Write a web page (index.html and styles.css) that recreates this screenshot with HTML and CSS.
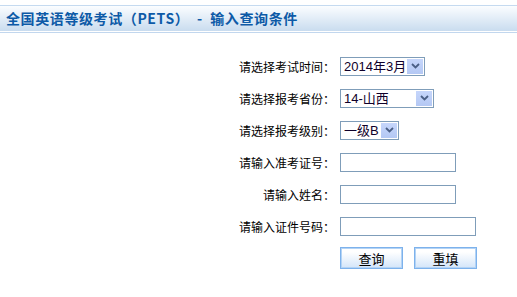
FILE: index.html
```html
<!DOCTYPE html>
<html>
<head>
  <meta charset="utf-8">
  <title>全国英语等级考试（PETS） - 输入查询条件</title>
<link rel="stylesheet" href="styles.css">
</head>
<body>
  <div class="title-bar">全国英语等级考试（PETS）  -  输入查询条件</div>

  <form class="query-form" id="queryForm">
    <label class="field-label" for="examTime">请选择考试时间：</label>
    <span class="select-box select-time">
      <select id="examTime">
        <option>2014年3月</option>
      </select>
      <span class="select-arrow"><svg width="9" height="6" viewBox="0 0 9 6"><path d="M1 1 L4.5 4.5 L8 1" fill="none" stroke="#4a5f86" stroke-width="1.8"/></svg></span>
    </span>

    <label class="field-label" for="province">请选择报考省份：</label>
    <span class="select-box select-province">
      <select id="province">
        <option>14-山西</option>
      </select>
      <span class="select-arrow"><svg width="9" height="6" viewBox="0 0 9 6"><path d="M1 1 L4.5 4.5 L8 1" fill="none" stroke="#4a5f86" stroke-width="1.8"/></svg></span>
    </span>

    <label class="field-label" for="level">请选择报考级别：</label>
    <span class="select-box select-level">
      <select id="level">
        <option>一级B</option>
      </select>
      <span class="select-arrow"><svg width="9" height="6" viewBox="0 0 9 6"><path d="M1 1 L4.5 4.5 L8 1" fill="none" stroke="#4a5f86" stroke-width="1.8"/></svg></span>
    </span>

    <label class="field-label" for="ticketNo">请输入准考证号：</label>
    <span class="field"><input type="text" id="ticketNo" class="text-input"></span>

    <label class="field-label" for="userName">请输入姓名：</label>
    <span class="field"><input type="text" id="userName" class="text-input"></span>

    <label class="field-label" for="idNo">请输入证件号码：</label>
    <span class="field"><input type="text" id="idNo" class="text-input wide"></span>

    <span></span>
    <span class="buttons">
      <input type="submit" class="btn" value="查询">
      <input type="reset" class="btn" value="重填">
    </span>
  </form>
</body>
</html>
```

FILE: styles.css
```css
body {
  margin: 0;
  background-color: #fff;
  font-family: "Liberation Sans", "Noto Sans CJK SC", sans-serif;
  font-size: 12px;
  color: #000;
}

.title-bar {
  margin-top: 5px;
  height: 25px;
  line-height: 25px;
  padding-left: 6px;
  border-top: 1px solid #c5daf0;
  background: linear-gradient(#fbfdff, #c9dcef);
  box-shadow: 0 1px 0 #fff, 0 2px 0 #c2d7ee;
  color: #0d5aa7;
  font-family: "Noto Sans CJK SC", sans-serif;
  font-size: 14px;
  font-weight: bold;
  letter-spacing: 0.6px;
  white-space: pre;
}

.query-form {
  display: grid;
  grid-template-columns: 335px auto;
  grid-auto-rows: 32px;
  column-gap: 5px;
  align-items: center;
  padding-top: 19px;
}

.field-label {
  text-align: right;
  font-family: "Noto Sans CJK SC", sans-serif;
  font-size: 12px;
}

.select-box {
  position: relative;
  display: block;
  height: 19px;
  box-sizing: border-box;
  border: 1px solid #7f9db9;
  background: #fff;
}

.select-time { width: 85px; }
.select-province { width: 94px; }
.select-level { width: 59px; }

.select-box select {
  appearance: none;
  -webkit-appearance: none;
  border: none;
  outline: none;
  background: transparent;
  width: 100%;
  height: 17px;
  padding: 0 0 0 3px;
  margin: 0;
  font-family: "Liberation Sans", "Noto Sans CJK SC", sans-serif;
  font-size: 13px;
  color: #10002a;
}

.select-arrow {
  position: absolute;
  top: 1px;
  right: 1px;
  width: 16px;
  height: 15px;
  display: flex;
  align-items: center;
  justify-content: center;
  background: linear-gradient(#c6d6fb, #b4c8f4);
  pointer-events: none;
}

.text-input {
  display: block;
  width: 116px;
  height: 19px;
  box-sizing: border-box;
  border: 1px solid #7f9db9;
  padding: 0 2px;
  margin: 0;
  outline: none;
}

.text-input.wide {
  width: 136px;
}

.buttons {
  display: flex;
  gap: 11px;
}

.btn {
  width: 63px;
  height: 22px;
  box-sizing: border-box;
  border: 1px solid #7db2ec;
  box-shadow: inset 0 0 0 1px #b3d3f5;
  background: linear-gradient(#ffffff 20%, #d3e5f9);
  font-family: "Noto Sans CJK SC", sans-serif;
  font-size: 13px;
  color: #000;
  padding: 0;
  cursor: pointer;
}
```
